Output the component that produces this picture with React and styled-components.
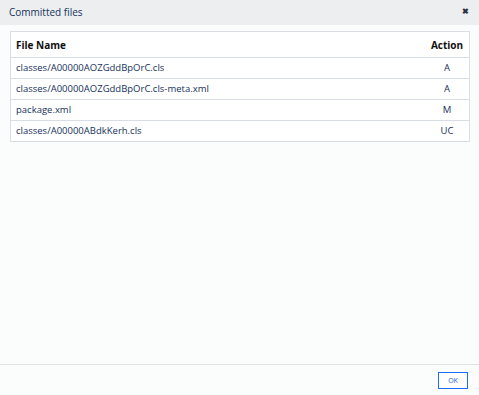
import styled, { createGlobalStyle } from "styled-components";

const Global = createGlobalStyle`
  html, body { margin: 0; padding: 0; }
  body {
    font-family: "Open Sans", "Liberation Sans", sans-serif;
    background: #fbfcfc;
    color: #16325c;
  }
`;

const Modal = styled.div`
  width: 479px;
  height: 395px;
  display: flex;
  flex-direction: column;
  background: #fbfcfc;
`;

const Header = styled.header`
  height: 25px;
  display: flex;
  align-items: center;
  justify-content: space-between;
  padding: 0 10px 1px 9px;
  box-sizing: border-box;
  background: #eceef0;
  font-size: 10px;
  color: #16325c;
`;

const Close = styled.button`
  border: 0;
  background: none;
  padding: 0;
  font-size: 8px;
  font-weight: bold;
  color: #2a3340;
  cursor: pointer;
  line-height: 1;
`;

const Body = styled.main`
  flex: 1;
  padding: 6px 9px 0 10px;
`;

const Table = styled.table`
  width: 100%;
  border-collapse: collapse;
  background: #fff;
  border: 1px solid #d8dde6;
  font-size: 9.5px;
  line-height: 1.2;
`;

const Th = styled.th`
  height: 25px;
  padding: 0 5px;
  text-align: ${(p) => (p.$center ? "center" : "left")};
  width: ${(p) => (p.$center ? "34px" : "auto")};
  font-size: 10px;
  font-weight: 700;
  color: #111;
  border-bottom: 1px solid #d8dde6;
`;

const Td = styled.td`
  height: 20px;
  padding: 0 5px;
  text-align: ${(p) => (p.$center ? "center" : "left")};
  color: #16325c;
  border-bottom: 1px solid #d8dde6;
`;

const Footer = styled.footer`
  height: 30px;
  border-top: 1px solid #e1e3e6;
  display: flex;
  align-items: center;
  justify-content: flex-end;
  padding: 0 11px 0 12px;
`;

const OkButton = styled.button`
  width: 30px;
  height: 17px;
  border: 1px solid #1a6dff;
  background: #fff;
  color: #2a63d4;
  font-family: inherit;
  font-size: 7px;
  padding: 0;
  cursor: pointer;
`;

const files = [
  ["classes/A00000AOZGddBpOrC.cls", "A"],
  ["classes/A00000AOZGddBpOrC.cls-meta.xml", "A"],
  ["package.xml", "M"],
  ["classes/A00000ABdkKerh.cls", "UC"],
];

export default function App() {
  return (
    <>
      <Global />
      <Modal>
        <Header>
          <span>Committed files</span>
          <Close>✖</Close>
        </Header>
        <Body>
          <Table>
            <thead>
              <tr>
                <Th>File Name</Th>
                <Th $center>Action</Th>
              </tr>
            </thead>
            <tbody>
              {files.map(([name, action]) => (
                <tr key={name}>
                  <Td>{name}</Td>
                  <Td $center>{action}</Td>
                </tr>
              ))}
            </tbody>
          </Table>
        </Body>
        <Footer>
          <OkButton>OK</OkButton>
        </Footer>
      </Modal>
    </>
  );
}
